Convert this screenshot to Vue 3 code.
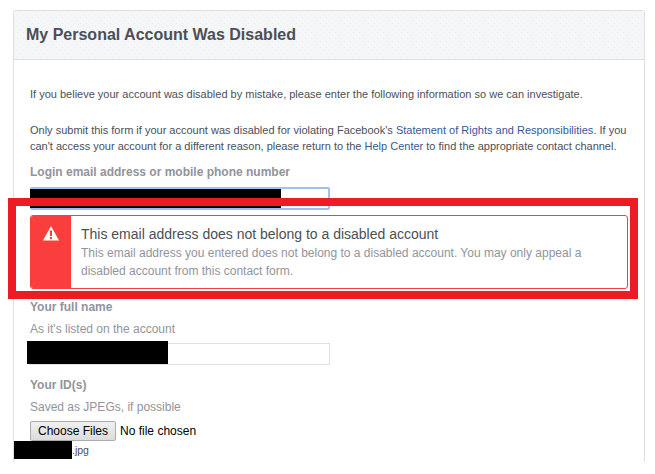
<template>
  <div class="page">
    <div class="card">
      <div class="card-header">
        <h2 class="card-title">My Personal Account Was Disabled</h2>
      </div>
      <div class="card-body">
        <p class="intro">
          If you believe your account was disabled by mistake, please enter the following information so we can investigate.
        </p>
        <p class="intro second">
          Only submit this form if your account was disabled for violating Facebook's
          <a class="link" href="#">Statement of Rights and Responsibilities</a>. If you
          can't access your account for a different reason, please return to the
          <a class="link" href="#">Help Center</a> to find the appropriate contact channel.
        </p>

        <label class="field-label login-label">Login email address or mobile phone number</label>
        <div class="field">
          <input class="text-input focused" type="text" />
          <span class="redact redact-email"></span>
        </div>

        <div class="alert">
          <div class="alert-icon">
            <svg width="16" height="15" viewBox="0 0 16 15">
              <path d="M8 0 L16 14.5 L0 14.5 Z" fill="#fff" />
              <rect x="7" y="4.5" width="2" height="5.5" fill="#fa3e3e" />
              <rect x="7" y="11" width="2" height="2" fill="#fa3e3e" />
            </svg>
          </div>
          <div class="alert-text">
            <div class="alert-title">This email address does not belong to a disabled account</div>
            <div class="alert-message">
              This email address you entered does not belong to a disabled account. You may only appeal a disabled account from this contact form.
            </div>
          </div>
        </div>

        <label class="field-label name-label">Your full name</label>
        <div class="hint">As it's listed on the account</div>
        <div class="field">
          <input class="text-input plain" type="text" />
          <span class="redact redact-name"></span>
        </div>

        <label class="field-label id-label">Your ID(s)</label>
        <div class="hint">Saved as JPEGs, if possible</div>
        <input class="file-input" type="file" multiple />
        <div class="file-name">
          <span class="redact-file"></span>
          <span class="file-ext">.jpg</span>
        </div>
      </div>
    </div>

    <!-- annotation drawn over the screenshot -->
    <div class="annotation"></div>
  </div>
</template>

<script setup>
</script>

<style>
html,
body {
  margin: 0;
  background: #fff;
}
</style>

<style scoped>
.page {
  position: relative;
  width: 655px;
  height: 474px;
  padding: 10px 10px 0 13px;
  box-sizing: border-box;
  overflow: hidden;
  font-family: "Liberation Sans", Arial, sans-serif;
  font-size: 12px;
  color: #4b4f56;
}

.card {
  width: 632px;
  height: 452px;
  box-sizing: border-box;
  border: 1px solid #dddfe2;
  border-bottom: none;
  border-radius: 3px 3px 0 0;
}

.card-header {
  height: 49px;
  box-sizing: border-box;
  display: flex;
  align-items: center;
  padding-left: 12px;
  background-color: #f5f6f7;
  background-image:
    radial-gradient(circle at 0.5px 0.5px, #eceef0 0.6px, transparent 0.7px),
    radial-gradient(circle at 3.5px 3.5px, #eceef0 0.6px, transparent 0.7px);
  background-size: 6px 6px;
  border-bottom: 1px solid #dddfe2;
}

.card-title {
  margin: 0;
  font-size: 16px;
  font-weight: bold;
  color: #4b4f56;
}

.card-body {
  padding: 26px 16px 0 16px;
}

.intro {
  margin: 0;
  font-size: 11px;
  line-height: 16px;
}

.second {
  margin-top: 20px;
}

.link {
  color: #365899;
  text-decoration: none;
}

.field-label {
  display: block;
  font-size: 12px;
  font-weight: bold;
  line-height: 15px;
  color: #90949c;
}

.login-label {
  margin-top: 11px;
}

.name-label {
  margin-top: 11px;
}

.id-label {
  margin-top: 13px;
}

.hint {
  margin-top: 7px;
  margin-bottom: 6px;
  line-height: 15px;
  color: #90949c;
}

.field {
  position: relative;
  width: 300px;
}

.text-input {
  display: block;
  width: 300px;
  height: 23px;
  box-sizing: border-box;
  margin: 0;
  padding: 0 3px;
  outline: none;
  background: #fff;
}

.login-label + .field {
  margin-top: 7px;
}

.focused {
  border: 2px solid #a0bff2;
  border-radius: 2px;
}

.plain {
  height: 22px;
  border: 1px solid #dddfe2;
}

.redact {
  position: absolute;
  background: #000;
}

.redact-email {
  left: 0;
  top: 2px;
  width: 251px;
  height: 19px;
}

.redact-name {
  left: -3px;
  top: -2px;
  width: 141px;
  height: 23px;
}

.alert {
  display: flex;
  width: 598px;
  height: 74px;
  box-sizing: border-box;
  margin-top: 5px;
  border: 1px solid #fa3e3e;
  border-radius: 3px;
  overflow: hidden;
}

.alert-icon {
  flex: none;
  width: 40px;
  display: flex;
  justify-content: center;
  padding-top: 10px;
  box-sizing: border-box;
  background: #fa3e3e;
}

.alert-text {
  padding: 10px 10px 0 10px;
}

.alert-title {
  font-size: 14px;
  line-height: 17px;
  color: #4b4f56;
}

.alert-message {
  margin-top: 1px;
  line-height: 18px;
  color: #90949c;
}

.file-input {
  display: block;
  font-family: "Liberation Sans", Arial, sans-serif;
  font-size: 12px;
  color: #000;
}

.file-input::file-selector-button {
  height: 20px;
  padding: 1px 7px;
  border: 1px solid #ababab;
  border-radius: 2px;
  background: linear-gradient(#f0f0f0, #dcdcdc);
  font-family: inherit;
  font-size: 12px;
  color: #000;
}

.file-name {
  display: flex;
  align-items: center;
  margin-left: -16px;
  height: 18px;
}

.file-ext {
  font-size: 10.5px;
  color: #4b4f56;
}

.redact-file {
  width: 58px;
  height: 18px;
  background: #000;
}

.annotation {
  position: absolute;
  left: 8px;
  top: 198px;
  width: 630px;
  height: 101px;
  box-sizing: border-box;
  border: 8px solid #ed1c24;
}
</style>
